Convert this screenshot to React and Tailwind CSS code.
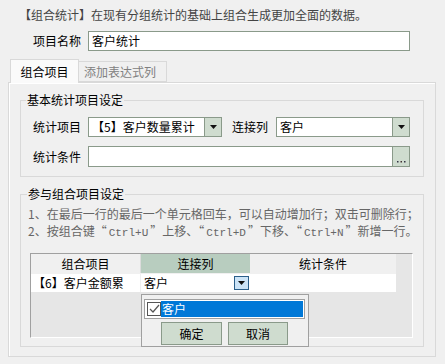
function Arrow() {
  return (
    <svg width="7" height="4" viewBox="0 0 7 4">
      <polygon points="0,0 7,0 3.5,4" fill="#111" />
    </svg>
  );
}

function Combo({ text, w }) {
  return (
    <div className={`flex h-[20px] ${w} border border-[#8a9a8a] bg-white`}>
      <div className="flex-1 pl-[3px] flex items-center whitespace-nowrap overflow-hidden">{text}</div>
      <div className="w-[17px] h-full bg-[#cfdccf] border-l border-[#8a9a8a] flex items-center justify-center">
        <Arrow />
      </div>
    </div>
  );
}

function Mono({ children }) {
  return <span className="font-['Liberation_Mono',monospace] text-[11px] leading-[0] px-[2px]">{children}</span>;
}

export default function App() {
  return (
    <div className="relative w-[445px] h-[364px] overflow-hidden bg-[#f0f0f0] text-[12px] leading-[14px] text-black font-['Noto_Sans_CJK_SC',sans-serif]">
      <div className="pt-[8px] pl-[19px] text-[#444] whitespace-nowrap">
        【组合统计】在现有分组统计的基础上组合生成更加全面的数据。
      </div>

      <div className="mt-[9px] flex items-center">
        <div className="w-[88px] pr-[7px] text-right">项目名称</div>
        <div className="w-[322px] h-[20px] border border-[#8a9a8a] bg-white pl-[3px] flex items-center">客户统计</div>
      </div>

      <div className="mt-[8px] pl-[10px] flex items-end">
        <div className="relative z-10 -mb-px w-[69px] h-[24px] bg-[#fafafa] border border-b-0 border-[#d9d9d9] flex items-center justify-center">
          组合项目
        </div>
        <div className="w-[88px] h-[21px] bg-[#f0f0f0] border border-l-0 border-[#d9d9d9] flex items-center pl-[5px] text-[#808080]">
          添加表达式列
        </div>
      </div>

      <div className="ml-[8px] w-[428px] h-[275px] border border-[#d9d9d9] shadow-[inset_1px_1px_0_#fff] bg-[#f0f0f0] pt-[17px] pl-[11px]">
        <div className="relative w-[404px] h-[77px] border border-[#d9d9d9] pt-[16px]">
          <span className="absolute left-[5px] top-[-8px] px-[1px] bg-[#f0f0f0]">基本统计项目设定</span>
          <div className="flex items-center">
            <div className="w-[67px] pl-[12px]">统计项目</div>
            <Combo text="【5】客户数量累计" w="w-[134px]" />
            <div className="w-[54px] pl-[10px]">连接列</div>
            <Combo text="客户" w="w-[134px]" />
          </div>
          <div className="mt-[9px] flex items-center">
            <div className="w-[67px] pl-[12px]">统计条件</div>
            <div className="flex w-[322px] h-[21px] border border-[#8a9a8a] bg-white">
              <div className="flex-1" />
              <div className="w-[17px] h-full bg-[#cfdccf] border-l border-[#8a9a8a] relative">
                <svg width="17" height="19" viewBox="0 0 17 19" className="absolute left-0 top-0">
                  <rect x="4" y="14" width="1.5" height="1.5" fill="#334" />
                  <rect x="7.5" y="14" width="1.5" height="1.5" fill="#433" />
                  <rect x="11" y="14" width="1.5" height="1.5" fill="#334" />
                </svg>
              </div>
            </div>
          </div>
        </div>

        <div className="relative mt-[17px] w-[404px] h-[153px] border border-[#d9d9d9] pt-[10px]">
          <span className="absolute left-[6px] top-[-8px] px-[1px] bg-[#f0f0f0]">参与组合项目设定</span>
          <div className="pl-[7px] text-[#666] whitespace-nowrap">
            <div className="h-[17px] leading-[17px]">1、在最后一行的最后一个单元格回车，可以自动增加行；双击可删除行；</div>
            <div className="h-[17px] leading-[17px]">
              2、按组合键“<Mono>Ctrl+U</Mono>”上移、“<Mono>Ctrl+D</Mono>”下移、“<Mono>Ctrl+N</Mono>”新增一行。
            </div>
          </div>

          <div className="mt-[14px] ml-[9px] w-[383px] h-[85px] border border-[#a0a0a0] border-r-white border-b-white bg-[#e6e6e6]">
            <div className="flex h-[19px]">
              <div className="w-[110px] bg-[#f0f0f0] border-r border-[#dcdcdc] flex items-center justify-center">组合项目</div>
              <div className="w-[109px] bg-[#b8cdbf] flex items-center justify-center">连接列</div>
              <div className="w-[146px] bg-[#f0f0f0] flex items-center justify-center">统计条件</div>
            </div>
            <div className="flex h-[19px] w-[365px] bg-white border-t border-[#f0f0f0]">
              <div className="w-[110px] pl-[2px] flex items-center whitespace-nowrap border-r border-[#f0f0f0]">【6】客户金额累</div>
              <div className="w-[109px] pl-[3px] pr-[1px] flex items-center justify-between">
                <span>客户</span>
                <div className="w-[15px] h-[14px] bg-[#cce4f7] border border-[#2b5f8a] flex items-center justify-center">
                  <Arrow />
                </div>
              </div>
              <div className="flex-1" />
            </div>
          </div>
        </div>
      </div>

      <div className="absolute left-[141px] top-[294px] w-[168px] h-[53px] border border-[#a0a0a0] bg-[#f0f0f0] pl-[2px] pt-[4px]">
        <div className="flex items-center w-[161px] h-[20px] border border-[#a0a0a0] bg-white p-[1px]">
          <div className="w-[14px] h-[14px] ml-[1px] border border-[#555] bg-white flex items-center justify-center">
            <svg width="12" height="12" viewBox="0 0 12 12">
              <polyline points="2,6 5,9 11,2" fill="none" stroke="#555" strokeWidth="1.2" />
            </svg>
          </div>
          <div className="flex-1 h-full bg-[#0078d7] text-white flex items-center pl-[1px]">客户</div>
        </div>
        <div className="mt-[3px] ml-[17px] flex gap-[6px]">
          <div className="w-[61px] h-[23px] bg-[#cfdccf] border border-[#8a9a8a] flex items-center justify-center">确定</div>
          <div className="w-[60px] h-[23px] bg-[#cfdccf] border border-[#8a9a8a] flex items-center justify-center">取消</div>
        </div>
      </div>
    </div>
  );
}
